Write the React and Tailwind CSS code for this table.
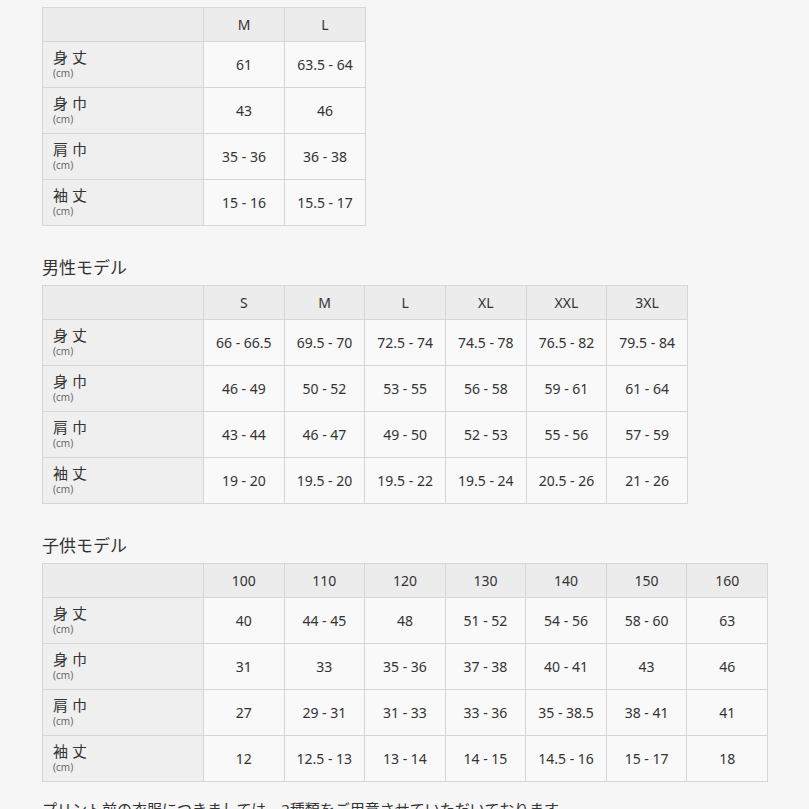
const womens = {
  sizes: ['M', 'L'],
  rows: [
    ['身 丈', ['61', '63.5 - 64']],
    ['身 巾', ['43', '46']],
    ['肩 巾', ['35 - 36', '36 - 38']],
    ['袖 丈', ['15 - 16', '15.5 - 17']],
  ],
};

const mens = {
  sizes: ['S', 'M', 'L', 'XL', 'XXL', '3XL'],
  rows: [
    ['身 丈', ['66 - 66.5', '69.5 - 70', '72.5 - 74', '74.5 - 78', '76.5 - 82', '79.5 - 84']],
    ['身 巾', ['46 - 49', '50 - 52', '53 - 55', '56 - 58', '59 - 61', '61 - 64']],
    ['肩 巾', ['43 - 44', '46 - 47', '49 - 50', '52 - 53', '55 - 56', '57 - 59']],
    ['袖 丈', ['19 - 20', '19.5 - 20', '19.5 - 22', '19.5 - 24', '20.5 - 26', '21 - 26']],
  ],
};

const kids = {
  sizes: ['100', '110', '120', '130', '140', '150', '160'],
  rows: [
    ['身 丈', ['40', '44 - 45', '48', '51 - 52', '54 - 56', '58 - 60', '63']],
    ['身 巾', ['31', '33', '35 - 36', '37 - 38', '40 - 41', '43', '46']],
    ['肩 巾', ['27', '29 - 31', '31 - 33', '33 - 36', '35 - 38.5', '38 - 41', '41']],
    ['袖 丈', ['12', '12.5 - 13', '13 - 14', '14 - 15', '14.5 - 16', '15 - 17', '18']],
  ],
};

const SizeTable = ({ data, width }) => (
  <table
    className="table-fixed border-collapse border border-[#d6d6d6] text-[#333]"
    style={{ width }}
  >
    <thead>
      <tr className="h-[34px] bg-[#ececec]">
        <th className="w-[161px] border border-[#d6d6d6]" />
        {data.sizes.map((s) => (
          <th key={s} className="border border-[#d6d6d6] text-[14px] font-normal">
            {s}
          </th>
        ))}
      </tr>
    </thead>
    <tbody>
      {data.rows.map(([label, vals]) => (
        <tr key={label} className="h-[46px]">
          <td className="border border-[#d6d6d6] bg-[#efefef] pl-[10px] pt-[6px] align-top">
            <div className="text-[15px] leading-[19px]">{label}</div>
            <div className="text-[10px] leading-[12px] text-[#666]">(cm)</div>
          </td>
          {vals.map((v, i) => (
            <td key={i} className="border border-[#d6d6d6] bg-[#f9f9f9] text-center text-[14px]">
              {v}
            </td>
          ))}
        </tr>
      ))}
    </tbody>
  </table>
);

export default function App() {
  return (
    <div
      className="min-h-screen overflow-hidden bg-[#f6f6f6] px-[42px] pt-[7px]"
      style={{ fontFamily: '"Noto Sans", "Noto Sans CJK JP", sans-serif' }}
    >
      <SizeTable data={womens} width={324} />

      <h2 className="mt-[30px] mb-[5px] text-[17px] leading-[24px] text-[#333]">男性モデル</h2>
      <SizeTable data={mens} width={646} />

      <h2 className="mt-[30px] mb-[5px] text-[17px] leading-[24px] text-[#333]">子供モデル</h2>
      <SizeTable data={kids} width={726} />

      <p className="mt-[16px] whitespace-nowrap text-[15px] leading-[22px] text-[#333]">
        プリント前の衣服につきましては、2種類をご用意させていただいております。
      </p>
    </div>
  );
}
